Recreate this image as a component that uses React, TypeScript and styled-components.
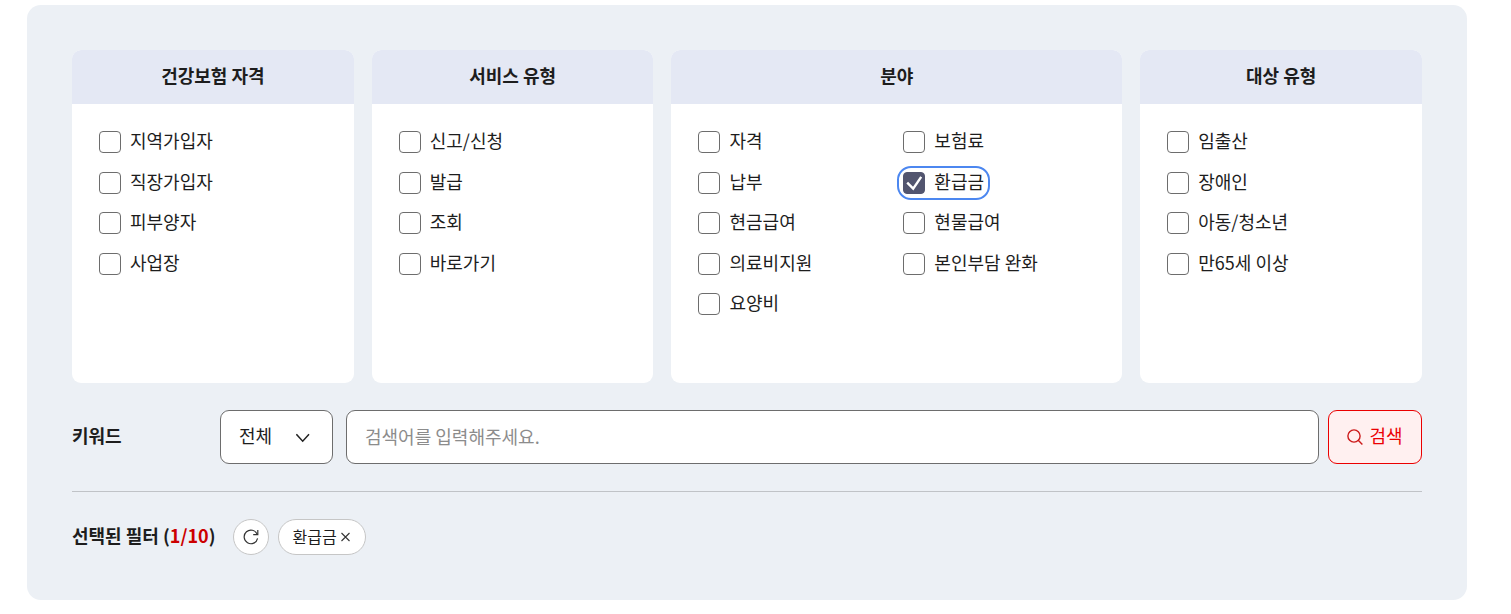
import React, { useState } from 'react';
import styled, { createGlobalStyle } from 'styled-components';

const GlobalStyle = createGlobalStyle`
  *, *::before, *::after { box-sizing: border-box; }
  body {
    margin: 0;
    background: #fff;
    color: #1d1d1d;
    font-family: 'Noto Sans CJK KR', 'Noto Sans', sans-serif;
    font-size: 18px;
    line-height: 27px;
  }
  button, input, select { font: inherit; color: inherit; }
`;

const Page = styled.main`
  padding: 5px 44px 14px 27px;
`;

const Panel = styled.form`
  display: flex;
  flex-direction: column;
  gap: 27px;
  padding: 45px;
  border-radius: 14px;
  background: #ecf0f5;
`;

const Groups = styled.div`
  display: grid;
  grid-template-columns: 10fr 10fr 16fr 10fr;
  gap: 18px;
`;

const Group = styled.section`
  overflow: hidden;
  border-radius: 9px;
  background: #fff;
`;

const GroupTitle = styled.h2`
  margin: 0;
  padding: 12px 0 15px;
  background: #e4e8f4;
  font-size: 18px;
  font-weight: 700;
  line-height: 27px;
  text-align: center;
`;

const Options = styled.div<{ $columns: number }>`
  display: grid;
  grid-template-columns: repeat(${(p) => p.$columns}, minmax(0, 1fr));
  grid-template-rows: repeat(5, 23px);
  align-content: space-between;
  column-gap: 13px;
  height: 185px;
  margin: 27px 27px 67px;
`;

const Option = styled.label`
  display: flex;
  align-items: center;
  justify-self: start;
  gap: 9px;
  height: 22px;
  border-radius: 8px;
  white-space: nowrap;
  cursor: pointer;

  &:focus-within {
    outline: 2px solid #4c87f0;
    outline-offset: 4px;
  }
`;

const OptionText = styled.span`
  padding-bottom: 3px;
`;

const Tick = styled.span`
  display: grid;

  > * { grid-area: 1 / 1; }
  svg { pointer-events: none; }
`;

const Box = styled.input`
  appearance: none;
  width: 22px;
  height: 22px;
  margin: 0;
  border: 1px solid #6d6d6d;
  border-radius: 4px;
  background: #fff;
  outline: none;
  cursor: pointer;

  &:checked {
    border-color: #52556f;
    background: #52556f;
  }
`;

const SearchRow = styled.div`
  display: flex;
  align-items: center;
`;

const KeywordLabel = styled.label`
  width: 148px;
  padding-bottom: 4px;
  font-weight: 700;
`;

const SelectWrap = styled.div`
  position: relative;
  width: 113px;
  margin-right: 13px;

  svg {
    position: absolute;
    top: 23px;
    right: 23px;
    pointer-events: none;
  }
`;

const Select = styled.select`
  appearance: none;
  display: block;
  width: 100%;
  height: 54px;
  padding: 0 18px 4px;
  border: 1px solid #6d6d6d;
  border-radius: 9px;
  background: #fff;
`;

const Keyword = styled.input`
  flex: 1;
  min-width: 0;
  height: 54px;
  margin-right: 9px;
  padding: 0 18px 2px;
  border: 1px solid #6d6d6d;
  border-radius: 9px;
  background: #fff;

  &::placeholder { color: #8c8c8c; opacity: 1; }
`;

const SearchButton = styled.button`
  display: flex;
  align-items: center;
  justify-content: center;
  gap: 6px;
  width: 94px;
  height: 54px;
  padding: 0;
  border: 1px solid #eb0000;
  border-radius: 9px;
  background: #fff0f0;
  color: #eb0003;
  cursor: pointer;

  span { padding-bottom: 4px; }
`;

const SelectedRow = styled.div`
  display: flex;
  align-items: center;
  gap: 9px;
  padding-top: 27px;
  border-top: 1px solid #c0c3c7;
`;

const SelectedTitle = styled.h3`
  margin: 0 9px 0 0;
  padding-bottom: 4px;
  font-size: 18px;
  font-weight: 700;
  line-height: 27px;
`;

const Count = styled.em`
  color: #cc0000;
  font-style: normal;
`;

const Pill = styled.button<{ $round?: boolean }>`
  display: flex;
  align-items: center;
  justify-content: center;
  gap: 4px;
  width: ${(p) => (p.$round ? '36px' : 'auto')};
  height: 36px;
  padding: ${(p) => (p.$round ? '0' : '0 14px 0 13px')};
  border: 1px solid #c6c6c6;
  border-radius: 18px;
  background: #fff;
  font-size: 16px;
  line-height: 24px;
  cursor: pointer;

  span { padding-bottom: 2px; }
`;

const groups = [
  { title: '건강보험 자격', columns: 1, items: ['지역가입자', '직장가입자', '피부양자', '사업장'] },
  { title: '서비스 유형', columns: 1, items: ['신고/신청', '발급', '조회', '바로가기'] },
  {
    title: '분야',
    columns: 2,
    items: ['자격', '보험료', '납부', '환급금', '현금급여', '현물급여', '의료비지원', '본인부담 완화', '요양비'],
  },
  { title: '대상 유형', columns: 1, items: ['임출산', '장애인', '아동/청소년', '만65세 이상'] },
];

const MAX_FILTERS = 10;
const initial = '환급금';

export default function App() {
  const [selected, setSelected] = useState<string[]>([initial]);

  const toggle = (item: string) =>
    setSelected((list) => {
      if (list.includes(item)) return list.filter((i) => i !== item);
      return list.length < MAX_FILTERS ? [...list, item] : list;
    });

  return (
    <>
      <GlobalStyle />
      <Page>
        <Panel onSubmit={(e) => e.preventDefault()}>
          <Groups>
            {groups.map((group) => (
              <Group key={group.title}>
                <GroupTitle>{group.title}</GroupTitle>
                <Options $columns={group.columns}>
                  {group.items.map((item) => (
                    <Option key={item}>
                      <Tick>
                        <Box
                          type="checkbox"
                          autoFocus={item === initial}
                          checked={selected.includes(item)}
                          onChange={() => toggle(item)}
                        />
                        {selected.includes(item) && (
                          <svg width="22" height="22" viewBox="0 0 22 22" fill="none" aria-hidden="true">
                            <path d="M4.2 10.6l6 6L18.2 4.8" stroke="#fff" strokeWidth="2.4" />
                          </svg>
                        )}
                      </Tick>
                      <OptionText>{item}</OptionText>
                    </Option>
                  ))}
                </Options>
              </Group>
            ))}
          </Groups>

          <SearchRow>
            <KeywordLabel htmlFor="keyword">키워드</KeywordLabel>
            <SelectWrap>
              <Select aria-label="검색 범위" defaultValue="전체">
                <option>전체</option>
              </Select>
              <svg width="14" height="10" viewBox="0 0 14 10" fill="none" aria-hidden="true">
                <path d="M.4 1.2l6.3 7 6.3-7" stroke="#222" strokeWidth="1.5" />
              </svg>
            </SelectWrap>
            <Keyword id="keyword" type="text" placeholder="검색어를 입력해주세요." />
            <SearchButton type="submit">
              <svg width="16" height="16" viewBox="0 0 16 16" fill="none" stroke="#cc1a1a" strokeWidth="1.4" aria-hidden="true">
                <circle cx="7" cy="7" r="6.1" />
                <path d="M11.2 11.2l4.2 4.2" />
              </svg>
              <span>검색</span>
            </SearchButton>
          </SearchRow>

          <SelectedRow>
            <SelectedTitle>
              선택된 필터 (<Count>{selected.length}/{MAX_FILTERS}</Count>)
            </SelectedTitle>
            <Pill type="button" $round aria-label="초기화" onClick={() => setSelected([])}>
              <svg width="16" height="16" viewBox="0 0 16 16" fill="none" stroke="#333" strokeWidth="1.2" aria-hidden="true">
                <path d="M14.6 9.4A6.8 6.8 0 1 1 14.2 5.2" />
                <path d="M14.8 1v4.6h-4.6" />
              </svg>
            </Pill>
            {selected.map((item) => (
              <Pill type="button" key={item} onClick={() => toggle(item)}>
                <span>{item}</span>
                <svg width="10" height="10" viewBox="0 0 10 10" stroke="#333" strokeWidth="1.1" aria-hidden="true">
                  <path d="M.5 1l8 8M8.5 1l-8 8" />
                </svg>
              </Pill>
            ))}
          </SelectedRow>
        </Panel>
      </Page>
    </>
  );
}
